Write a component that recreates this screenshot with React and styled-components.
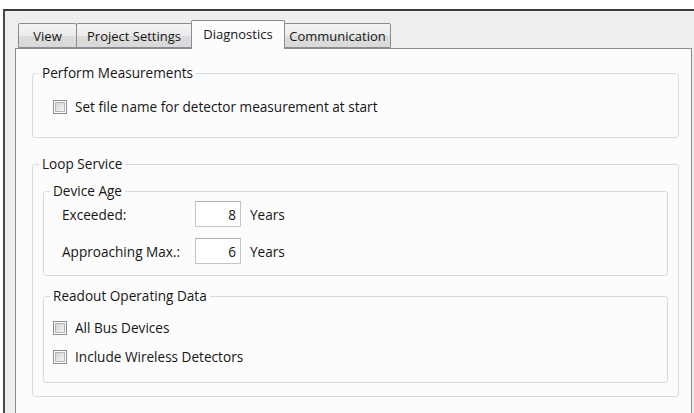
import React from 'react';
import styled, { createGlobalStyle } from 'styled-components';

const GlobalStyle = createGlobalStyle`
  html, body {
    margin: 0;
    padding: 0;
    background: #ffffff;
  }
  body {
    font-family: "Open Sans", "DejaVu Sans", sans-serif;
    font-size: 13.6px;
    color: #161616;
  }
`;

const Window = styled.div`
  box-sizing: border-box;
  margin: 9px 0 0 3px;
  height: 404px;
  border-top: 2px solid #3a3a3a;
  border-left: 2px solid #4a4a4a;
  background: #eeeeee;
  padding: 0 2px 0 10px;
  overflow: hidden;
`;

const TabStrip = styled.div`
  display: flex;
  align-items: flex-end;
  height: 37px;
  padding-left: 3px;
`;

const Tab = styled.div`
  box-sizing: border-box;
  position: relative;
  z-index: ${({ active }) => (active ? 2 : 1)};
  width: ${({ width }) => width}px;
  height: ${({ active }) => (active ? 29 : 25)}px;
  margin-left: -1px;
  margin-bottom: ${({ active }) => (active ? -1 : 0)}px;
  display: flex;
  align-items: center;
  justify-content: center;
  padding-bottom: ${({ active }) => (active ? 3 : 0)}px;
  border: 1px solid #898c95;
  border-bottom: ${({ active }) => (active ? 'none' : '1px solid #898c95')};
  border-radius: 2px 2px 0 0;
  background: ${({ active }) =>
    active ? '#fcfcfc' : 'linear-gradient(#f4f4f4, #ebebeb 50%, #dcdcdc 51%, #d9d9d9)'};
  font-size: 13px;
  white-space: nowrap;
  &:first-child {
    margin-left: 0;
  }
`;

const Panel = styled.div`
  box-sizing: border-box;
  height: 400px;
  border: 1px solid #898c95;
  background: #fcfcfc;
  padding: 16px 12px 0 16px;
`;

const Group = styled.fieldset`
  margin: ${({ gap }) => gap || 0}px 0 0 0;
  padding: 0 6px;
  border: 1px solid #d3dde3;
  border-radius: 3px;
  min-width: 0;
`;

const Legend = styled.legend`
  padding: 0 3px;
  line-height: 16px;
`;

const GroupBody = styled.div`
  padding: ${({ pad }) => pad};
  display: flex;
  flex-direction: column;
  gap: ${({ rowGap }) => rowGap || 0}px;
`;

const CheckRow = styled.label`
  display: flex;
  align-items: center;
  gap: 8px;
  height: 16px;
  line-height: 16px;
`;

const CheckBox = styled.span`
  box-sizing: border-box;
  width: 14px;
  height: 14px;
  border: 1px solid #8f8f8f;
  background: #ffffff;
  padding: 1px;
  &::after {
    content: '';
    display: block;
    width: 100%;
    height: 100%;
    box-sizing: border-box;
    border: 1px solid #b4b8be;
    background: linear-gradient(135deg, #d2d4d8, #f4f4f4);
  }
`;

const FieldRow = styled.div`
  display: flex;
  align-items: center;
  height: 26px;
`;

const FieldLabel = styled.span`
  width: 133px;
`;

const NumberBox = styled.div`
  box-sizing: border-box;
  width: 46px;
  height: 26px;
  border: 1px solid #c2c5ca;
  border-top-color: #abadb3;
  background: #ffffff;
  display: flex;
  align-items: center;
  justify-content: flex-end;
  padding-right: 4px;
`;

const Unit = styled.span`
  margin-left: 9px;
`;

const tabs = [
  { label: 'View', width: 59 },
  { label: 'Project Settings', width: 116 },
  { label: 'Diagnostics', width: 94 },
  { label: 'Communication', width: 107 },
];

const ages = [
  { label: 'Exceeded:', value: 8 },
  { label: 'Approaching Max.:', value: 6 },
];

const Check = ({ children }) => (
  <CheckRow>
    <CheckBox />
    <span>{children}</span>
  </CheckRow>
);

const App = () => {
  const activeTab = 'Diagnostics';

  return (
    <>
      <GlobalStyle />
      <Window>
        <TabStrip>
          {tabs.map((t) => (
            <Tab key={t.label} width={t.width} active={t.label === activeTab}>
              {t.label}
            </Tab>
          ))}
        </TabStrip>

        <Panel>
          <Group>
            <Legend>Perform Measurements</Legend>
            <GroupBody pad="18px 0 22px 14px">
              <Check>Set file name for detector measurement at start</Check>
            </GroupBody>
          </Group>

          <Group gap={18}>
            <Legend>Loop Service</Legend>
            <GroupBody pad="11px 4px 13px 4px">
              <Group>
                <Legend>Device Age</Legend>
                <GroupBody pad="2px 0 11px 12px" rowGap={11}>
                  {ages.map((a) => (
                    <FieldRow key={a.label}>
                      <FieldLabel>{a.label}</FieldLabel>
                      <NumberBox>{a.value}</NumberBox>
                      <Unit>Years</Unit>
                    </FieldRow>
                  ))}
                </GroupBody>
              </Group>

              <Group gap={12}>
                <Legend>Readout Operating Data</Legend>
                <GroupBody pad="16px 0 17px 3px" rowGap={13}>
                  <Check>All Bus Devices</Check>
                  <Check>Include Wireless Detectors</Check>
                </GroupBody>
              </Group>
            </GroupBody>
          </Group>
        </Panel>
      </Window>
    </>
  );
};

export default App;
